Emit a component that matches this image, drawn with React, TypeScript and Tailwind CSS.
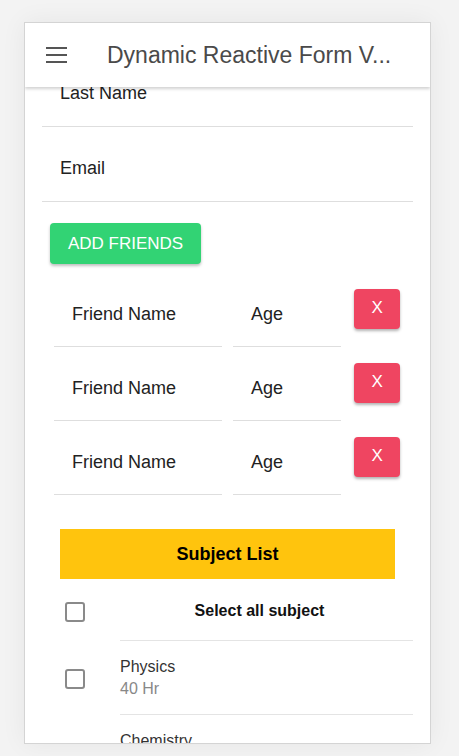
import React from "react";

const font = { fontFamily: '"Liberation Sans", Arial, sans-serif' };

function Checkbox() {
  return <div className="w-[20px] h-[20px] border-2 border-[#8a8a8a] rounded-[3px] shrink-0" />;
}

function FriendRow() {
  return (
    <div className="flex items-start h-[74px] pl-[29px] pr-[30px]">
      <div className="w-[169px] h-[74px] border-b border-[#dedede] flex items-center pl-[18px] pt-[10px] text-[18px] text-[#222]">
        Friend Name
      </div>
      <div className="ml-[11px] w-[109px] h-[74px] border-b border-[#dedede] flex items-center pl-[18px] pt-[10px] text-[18px] text-[#222]">
        Age
      </div>
      <div className="ml-[13px] mt-[16px] w-[46px] h-[40px] rounded-[4px] bg-[#ef4561] shadow-[0_2px_3px_rgba(0,0,0,0.3)] flex items-center justify-center text-white text-[17px] pb-[3px]">
        X
      </div>
    </div>
  );
}

export default function App() {
  return (
    <div className="w-[459px] h-[756px] bg-[#f3f3f3] overflow-hidden pt-[22px] pl-[24px]" style={font}>
      <div className="w-[407px] h-[722px] bg-white border border-[#d4d4d4] shadow-[0_0_24px_rgba(0,0,0,0.06)] flex flex-col overflow-hidden">
        <div className="h-[64px] shrink-0 flex items-center relative z-10 bg-white shadow-[0_2px_3px_rgba(0,0,0,0.18)]">
          <div className="ml-[21px] w-[21px] flex flex-col gap-[5px]">
            <div className="h-[2px] bg-[#555]" />
            <div className="h-[2px] bg-[#555]" />
            <div className="h-[2px] bg-[#555]" />
          </div>
          <div className="ml-[40px] text-[23px] text-[#4a4a4a] whitespace-nowrap">
            Dynamic Reactive Form V...
          </div>
        </div>
        <div className="flex-1 overflow-hidden">
          <div className="mt-[-35px]">
            <div className="mx-[17px] h-[75px] border-b border-[#dedede] flex items-start pl-[18px] pt-[28px] text-[18px] text-[#222]">
              Last Name
            </div>
            <div className="mx-[17px] h-[75px] border-b border-[#dedede] flex items-start pl-[18px] pt-[28px] text-[18px] text-[#222]">
              Email
            </div>
            <div className="ml-[25px] mt-[21px] w-[151px] h-[41px] rounded-[4px] bg-[#32d374] shadow-[0_2px_3px_rgba(0,0,0,0.25)] flex items-center justify-center text-white text-[17px]">
              ADD FRIENDS
            </div>
            <div className="mt-[9px]">
              <FriendRow />
              <FriendRow />
              <FriendRow />
            </div>
            <div className="mx-[35px] mt-[34px] h-[50px] bg-[#ffc40d] flex items-center justify-center font-bold text-[18px] text-black">
              Subject List
            </div>
            <div className="flex items-stretch h-[62px] pl-[40px] pr-[17px]">
              <div className="w-[55px] flex items-center pt-[4px]">
                <Checkbox />
              </div>
              <div className="flex-1 border-b border-[#e4e4e4] flex items-center justify-center pr-[14px] pt-[3px] font-bold text-[16px] text-[#111]">
                Select all subject
              </div>
            </div>
            <div className="flex items-stretch h-[74px] pl-[40px] pr-[17px]">
              <div className="w-[55px] flex items-center pt-[2px]">
                <Checkbox />
              </div>
              <div className="flex-1 border-b border-[#e4e4e4] flex flex-col justify-center text-[16px] leading-[22px]">
                <div className="text-[#333]">Physics</div>
                <div className="text-[#888]">40 Hr</div>
              </div>
            </div>
            <div className="flex items-stretch h-[74px] pl-[40px] pr-[17px]">
              <div className="w-[55px] flex items-center pt-[2px]">
                <Checkbox />
              </div>
              <div className="flex-1 border-b border-[#e4e4e4] flex flex-col justify-center text-[16px] leading-[22px]">
                <div className="text-[#333]">Chemistry</div>
                <div className="text-[#888]">40 Hr</div>
              </div>
            </div>
          </div>
        </div>
      </div>
    </div>
  );
}
